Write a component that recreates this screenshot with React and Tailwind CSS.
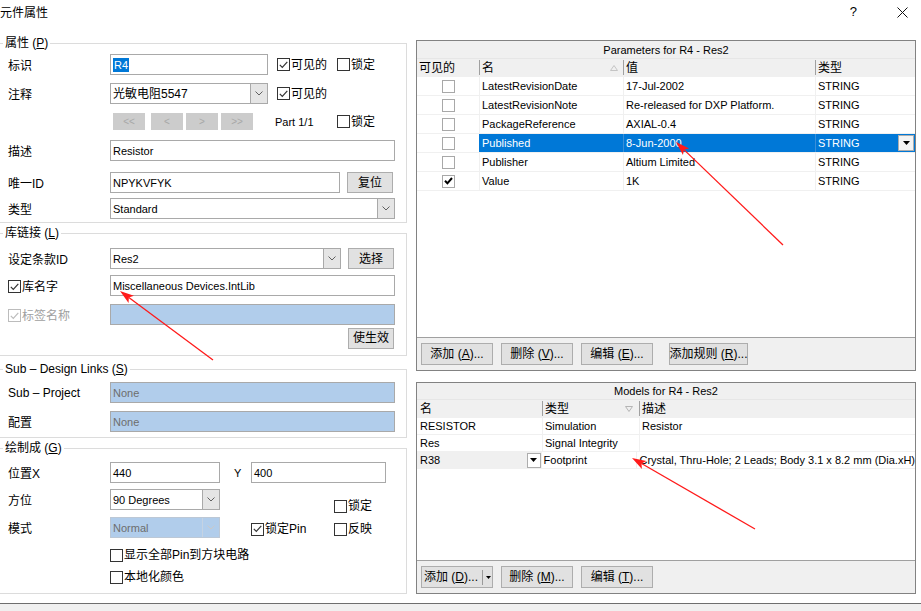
import React from "react";

const F = "font-['Liberation_Sans','Noto_Sans_CJK_SC',sans-serif]";

const Chevron = ({ color = "#606060" }) => (
  <svg width="8" height="5" viewBox="0 0 8 5">
    <path d="M0.5 0.5 L4 4 L7.5 0.5" fill="none" stroke={color} strokeWidth="1" />
  </svg>
);

const DownTri = () => (
  <svg width="7" height="4" viewBox="0 0 7 4">
    <polygon points="0,0 7,0 3.5,4" fill="#000" />
  </svg>
);

const Box = ({ checked, disabled }) => (
  <span
    className={`inline-flex w-[13px] h-[13px] shrink-0 items-center justify-center border bg-white ${
      disabled ? "border-[#bcbcbc]" : "border-[#333333]"
    }`}
  >
    {checked && (
      <svg width="9" height="8" viewBox="0 0 9 8">
        <path
          d="M0.8 3.8 L3.3 6.4 L8.3 0.9"
          fill="none"
          stroke={disabled ? "#bcbcbc" : "#333333"}
          strokeWidth="1.2"
        />
      </svg>
    )}
  </span>
);

const CheckLabel = ({ checked, disabled, children, className = "" }) => (
  <div className={`flex items-center gap-[1px] h-[14px] whitespace-nowrap ${disabled ? "text-[#a0a0a0]" : ""} ${className}`}>
    <Box checked={checked} disabled={disabled} />
    <span className="leading-[14px]">{children}</span>
  </div>
);

const Field = ({ className = "", blue, children }) => (
  <div
    className={`h-[21px] flex items-center pl-[2px] border border-[#a9a9a9] text-[11px] whitespace-nowrap overflow-hidden ${
      blue ? "bg-[#b1cdeb] text-[#6d6d6d]" : "bg-white"
    } ${className}`}
  >
    {children}
  </div>
);

const Combo = ({ className = "", disabled, children }) => (
  <div
    className={`h-[21px] flex border ${
      disabled ? "border-[#bcc8d6] bg-[#b1cdeb] text-[#6d6d6d]" : "border-[#a9a9a9] bg-white"
    } ${className}`}
  >
    <div className="flex-1 flex items-center pl-[2px] text-[11px] overflow-hidden whitespace-nowrap">{children}</div>
    <div
      className={`w-[17px] flex items-center justify-center border-l ${
        disabled ? "border-[#c5d3e3] bg-[#b1cdeb]" : "border-[#a9a9a9] bg-[#e5e5e5]"
      }`}
    >
      <Chevron color={disabled ? "#c9c9c9" : "#606060"} />
    </div>
  </div>
);

const Btn = ({ className = "", children }) => (
  <div className={`h-[21px] flex items-center justify-center bg-[#e1e1e1] border border-[#adadad] whitespace-nowrap ${className}`}>
    {children}
  </div>
);

const NavBtn = ({ children, className = "" }) => (
  <div className={`w-[32px] h-[17px] flex items-center justify-center bg-[#cccccc] text-[#a8a8a8] text-[10px] ${className}`}>
    {children}
  </div>
);

const Label = ({ children, className = "" }) => (
  <span className={`w-[102px] shrink-0 pt-[3px] leading-[14px] whitespace-nowrap ${className}`}>{children}</span>
);

const Group = ({ title, h, className = "", children, pt }) => (
  <fieldset className={`w-[407px] min-w-0 border border-l-0 border-[#dcdcdc] ${h} ${className}`}>
    <legend className="ml-[3px] px-[2px] leading-[16px] text-[12px]">{title}</legend>
    <div className={`flex flex-col pl-[8px] pr-[11px] ${pt}`}>{children}</div>
  </fieldset>
);

function Arrow({ x1, y1, x2, y2 }) {
  const dx = x2 - x1;
  const dy = y2 - y1;
  const L = Math.hypot(dx, dy);
  const ux = dx / L;
  const uy = dy / L;
  const len = 14;
  const w = 4.5;
  const bx = x2 - ux * len;
  const by = y2 - uy * len;
  const nx = x2 - ux * (len - 3);
  const ny = y2 - uy * (len - 3);
  const pts = `${x2},${y2} ${bx - uy * w},${by + ux * w} ${nx},${ny} ${bx + uy * w},${by - ux * w}`;
  return (
    <g>
      <line x1={x1} y1={y1} x2={nx} y2={ny} stroke="#ff1a1a" strokeWidth="1.3" />
      <polygon points={pts} fill="#ff1a1a" />
    </g>
  );
}

const params = [
  { v: false, n: "LatestRevisionDate", val: "17-Jul-2002", t: "STRING" },
  { v: false, n: "LatestRevisionNote", val: "Re-released for DXP Platform.", t: "STRING" },
  { v: false, n: "PackageReference", val: "AXIAL-0.4", t: "STRING" },
  { v: false, n: "Published", val: "8-Jun-2000", t: "STRING", sel: true },
  { v: false, n: "Publisher", val: "Altium Limited", t: "STRING" },
  { v: true, n: "Value", val: "1K", t: "STRING" },
];

const GridBox = ({ checked }) => (
  <span className="inline-flex w-[13px] h-[13px] items-center justify-center border border-[#a8a8a8] bg-white">
    {checked && (
      <svg width="9" height="8" viewBox="0 0 9 8">
        <path d="M1 3.8 L3.4 6.3 L8 1" fill="none" stroke="#000" strokeWidth="2" />
      </svg>
    )}
  </span>
);

const SortUp = () => (
  <svg width="8" height="6" viewBox="0 0 8 6">
    <polygon points="4,0.5 7.5,5.5 0.5,5.5" fill="none" stroke="#c4c4c4" strokeWidth="1" />
  </svg>
);
const SortDown = () => (
  <svg width="8" height="6" viewBox="0 0 8 6">
    <polygon points="0.5,0.5 7.5,0.5 4,5.5" fill="none" stroke="#b4b4b4" strokeWidth="1" />
  </svg>
);

const Acc = ({ pre, k, post }) => (
  <span className="whitespace-nowrap">
    {pre}(<u>{k}</u>){post}
  </span>
);

function ParamsPanel() {
  return (
    <div className="h-[331px] flex flex-col border border-[#828282] bg-white">
      <div className="h-[18px] shrink-0 flex items-center justify-center bg-[#f0f0f0] border-b border-[#e6e6e6] text-[11px]">
        Parameters for R4 - Res2
      </div>
      <div className="h-[18px] shrink-0 flex bg-[#f0f0f0] border-b border-[#f0f0f0]">
        <div className="w-[62px] flex items-center pl-[2px]">可见的</div>
        <div className="w-[144px] flex items-center justify-between pl-[2px] pr-[5px] border-l border-[#a0a0a0] my-[1px]">
          <span>名</span>
          <SortUp />
        </div>
        <div className="w-[192px] flex items-center pl-[2px] border-l border-[#a0a0a0] my-[1px]">值</div>
        <div className="flex-1 flex items-center pl-[2px] border-l border-[#a0a0a0] my-[1px]">类型</div>
      </div>
      <div className="flex-1 flex flex-col text-[11px]">
        {params.map((p) => (
          <div key={p.n} className="h-[19px] flex border-b border-[#f0f0f0]">
            <div className="w-[62px] flex items-center justify-center">
              <GridBox checked={p.v} />
            </div>
            <div
              className={`w-[144px] flex items-center pl-[2px] border-l ${
                p.sel ? "bg-[#0078d7] text-white border-[#0078d7]" : "border-[#f0f0f0]"
              }`}
            >
              {p.n}
            </div>
            <div
              className={`w-[192px] flex items-center pl-[2px] border-l ${
                p.sel ? "bg-[#0078d7] text-white border-[#3a8fd8]" : "border-[#f0f0f0]"
              }`}
            >
              {p.val}
            </div>
            <div
              className={`flex-1 flex items-center pl-[2px] border-l ${
                p.sel ? "bg-[#0078d7] text-white border-[#3a8fd8]" : "border-[#f0f0f0]"
              }`}
            >
              <span className="flex-1">{p.t}</span>
              {p.sel && (
                <span className="w-[16px] h-[16px] mr-[1px] flex items-center justify-center bg-[#f4f4f4] border border-[#adadad]">
                  <DownTri />
                </span>
              )}
            </div>
          </div>
        ))}
      </div>
      <div className="h-[33px] shrink-0 flex items-start pt-[5px] pl-[4px] bg-[#f0f0f0] border-t border-[#a0a0a0]">
        <Btn className="w-[72px] h-[22px]">
          <Acc pre="添加 " k="A" post="..." />
        </Btn>
        <Btn className="w-[72px] h-[22px] ml-[8px]">
          <Acc pre="删除 " k="V" post="..." />
        </Btn>
        <Btn className="w-[72px] h-[22px] ml-[8px]">
          <Acc pre="编辑 " k="E" post="..." />
        </Btn>
        <Btn className="w-[79px] h-[22px] ml-[16px] border-[#8c8c8c]">
          <Acc pre="添加规则 " k="R" post="..." />
        </Btn>
      </div>
    </div>
  );
}

const models = [
  { n: "RESISTOR", t: "Simulation", d: "Resistor" },
  { n: "Res", t: "Signal Integrity", d: "" },
  { n: "R38", t: "Footprint", d: "Crystal, Thru-Hole; 2 Leads; Body 3.1 x 8.2 mm (Dia.xH)", drop: true },
];

function ModelsPanel() {
  return (
    <div className="mt-[11px] h-[212px] flex flex-col border border-[#828282] bg-white">
      <div className="h-[17px] shrink-0 flex items-center justify-center bg-[#f0f0f0] border-b border-[#e6e6e6] text-[11px]">
        Models for R4 - Res2
      </div>
      <div className="h-[18px] shrink-0 flex bg-[#f0f0f0] border-b border-[#f0f0f0]">
        <div className="w-[125px] flex items-center pl-[3px]">名</div>
        <div className="w-[97px] flex items-center justify-between pl-[2px] pr-[6px] border-l border-[#a0a0a0] my-[1px]">
          <span>类型</span>
          <SortDown />
        </div>
        <div className="flex-1 flex items-center pl-[2px] border-l border-[#a0a0a0] my-[1px]">描述</div>
      </div>
      <div className="flex-1 flex flex-col text-[11px]">
        {models.map((m) => (
          <div key={m.n} className="h-[17px] flex border-b border-[#f0f0f0]">
            <div className={`w-[125px] flex items-center pl-[3px] ${m.drop ? "bg-[#f0f0f0]" : ""}`}>
              <span className="flex-1">{m.n}</span>
              {m.drop && (
                <span className="w-[14px] h-[15px] flex items-center justify-center bg-white border border-[#adadad]">
                  <DownTri />
                </span>
              )}
            </div>
            <div className="w-[97px] flex items-center pl-[2px] border-l border-[#f0f0f0] whitespace-nowrap">{m.t}</div>
            <div className="flex-1 flex items-center pl-[2px] border-l border-[#f0f0f0] whitespace-nowrap">{m.d}</div>
          </div>
        ))}
      </div>
      <div className="h-[33px] shrink-0 flex items-start pt-[5px] pl-[4px] bg-[#f0f0f0] border-t border-[#a0a0a0]">
        <Btn className="w-[72px] h-[22px] justify-start pl-[2px]">
          <Acc pre="添加 " k="D" post="..." />
          <span className="ml-[4px] w-px h-[15px] bg-[#9a9a9a]" />
          <span className="ml-[3px] flex items-center">
            <svg width="5" height="3" viewBox="0 0 5 3">
              <polygon points="0,0 5,0 2.5,3" fill="#000" />
            </svg>
          </span>
        </Btn>
        <Btn className="w-[72px] h-[22px] ml-[8px]">
          <Acc pre="删除 " k="M" post="..." />
        </Btn>
        <Btn className="w-[72px] h-[22px] ml-[8px]">
          <Acc pre="编辑 " k="T" post="..." />
        </Btn>
      </div>
    </div>
  );
}

export default function App() {
  return (
    <div className={`relative w-[921px] h-[611px] overflow-hidden bg-white text-black text-[12px] leading-[14px] ${F}`}>
      {/* title bar */}
      <div className="h-[35px] flex items-start pt-[6px]">
        <span className="leading-[14px]">元件属性</span>
        <span className="ml-auto text-[13px] leading-[14px] -mt-[1px]">?</span>
        <span className="ml-[40px] mr-[13px] mt-[1px]">
          <svg width="11" height="11" viewBox="0 0 11 11">
            <path d="M0.5 0.5 L10.5 10.5 M10.5 0.5 L0.5 10.5" stroke="#111" strokeWidth="1" />
          </svg>
        </span>
      </div>

      <div className="flex h-[559px]">
        {/* left column */}
        <div className="w-[407px] flex flex-col">
          <Group title={<Acc pre="属性 " k="P" />} h="h-[188px]" pt="pt-[3px]">
            <div className="flex items-center h-[21px]">
              <Label>标识</Label>
              <Field className="w-[158px]">
                <span className="bg-[#0078d7] text-white px-[1px] leading-[14px]">R4</span>
              </Field>
              <CheckLabel checked className="ml-[9px] w-[60px]">可见的</CheckLabel>
              <CheckLabel>锁定</CheckLabel>
            </div>
            <div className="flex items-center h-[21px] mt-[8px]">
              <Label>注释</Label>
              <Combo className="w-[158px]">
                <span className="text-[12px]">光敏电阻5547</span>
              </Combo>
              <CheckLabel checked className="ml-[9px]">可见的</CheckLabel>
            </div>
            <div className="flex items-center h-[17px] mt-[9px]">
              <span className="w-[105px] shrink-0" />
              <NavBtn>&lt;&lt;</NavBtn>
              <NavBtn className="ml-[6px]">&lt;</NavBtn>
              <NavBtn className="ml-[3px]">&gt;</NavBtn>
              <NavBtn className="ml-[3px]">&gt;&gt;</NavBtn>
              <span className="ml-[22px] w-[62px] text-[11px]">Part 1/1</span>
              <CheckLabel>锁定</CheckLabel>
            </div>
            <div className="flex items-center h-[21px] mt-[10px]">
              <Label>描述</Label>
              <Field className="flex-1">Resistor</Field>
            </div>
            <div className="flex items-center h-[21px] mt-[11px]">
              <Label>唯一ID</Label>
              <Field className="w-[230px]">NPYKVFYK</Field>
              <Btn className="w-[46px] ml-[7px]">复位</Btn>
            </div>
            <div className="flex items-center h-[21px] mt-[5px]">
              <Label>类型</Label>
              <Combo className="flex-1">Standard</Combo>
            </div>
          </Group>

          <Group title={<Acc pre="库链接 " k="L" />} h="h-[131px]" className="mt-[2px]" pt="pt-[7px]">
            <div className="flex items-center h-[21px]">
              <Label>设定条款ID</Label>
              <Combo className="w-[231px]">Res2</Combo>
              <Btn className="w-[46px] ml-[7px]">选择</Btn>
            </div>
            <div className="flex items-center h-[21px] mt-[6px]">
              <div className="w-[102px] shrink-0 pt-[2px]">
                <CheckLabel checked>库名字</CheckLabel>
              </div>
              <Field className="flex-1">Miscellaneous Devices.IntLib</Field>
            </div>
            <div className="flex items-center h-[21px] mt-[8px]">
              <div className="w-[102px] shrink-0 pt-[2px]">
                <CheckLabel checked disabled>标签名称</CheckLabel>
              </div>
              <Field className="flex-1" blue />
            </div>
            <div className="flex items-center justify-end h-[20px] mt-[3px]">
              <Btn className="w-[46px] h-[20px] mr-[1px]">使生效</Btn>
            </div>
          </Group>

          <Group title={<Acc pre="Sub – Design Links " k="S" />} h="h-[77px]" className="mt-[5px]" pt="pt-[5px]">
            <div className="flex items-center h-[21px]">
              <span className="w-[102px] shrink-0 leading-[14px]">Sub – Project</span>
              <Field className="flex-1" blue>None</Field>
            </div>
            <div className="flex items-center h-[21px] mt-[8px]">
              <Label>配置</Label>
              <Field className="flex-1" blue>None</Field>
            </div>
          </Group>

          <Group title={<Acc pre="绘制成 " k="G" />} h="h-[154px]" className="mt-[2px]" pt="pt-[6px]">
            <div className="flex items-center h-[21px]">
              <Label>位置X</Label>
              <Field className="w-[110px]">440</Field>
              <span className="ml-[14px] w-[17px] text-[11px]">Y</span>
              <Field className="w-[135px]">400</Field>
            </div>
            <div className="flex mt-[6px]">
              <div className="w-[212px] flex flex-col">
                <div className="flex items-center h-[21px]">
                  <Label>方位</Label>
                  <Combo className="w-[110px]">90 Degrees</Combo>
                </div>
                <div className="flex items-center h-[21px] mt-[7px]">
                  <Label>模式</Label>
                  <Combo className="w-[110px]" disabled>
                    Normal
                  </Combo>
                </div>
              </div>
              <div className="w-[114px] pl-[31px] pt-[33px]">
                <CheckLabel checked>锁定Pin</CheckLabel>
              </div>
              <div className="flex flex-col pt-[10px]">
                <CheckLabel>锁定</CheckLabel>
                <CheckLabel className="mt-[9px]">反映</CheckLabel>
              </div>
            </div>
            <div className="pl-[102px] mt-[10px]">
              <CheckLabel>显示全部Pin到方块电路</CheckLabel>
            </div>
            <div className="pl-[102px] mt-[8px]">
              <CheckLabel>本地化颜色</CheckLabel>
            </div>
          </Group>
        </div>

        {/* right column */}
        <div className="ml-[9px] w-[500px] flex flex-col pt-[5px]">
          <ParamsPanel />
          <ModelsPanel />
        </div>
      </div>

      <div className="h-[9px]" />
      <div className="h-px bg-[#6e6e6e]" />
      <div className="h-[7px] bg-[#f0f0f0]" />

      <svg className="absolute left-0 top-0 pointer-events-none" width="921" height="611" viewBox="0 0 921 611">
        <Arrow x1={213} y1={360} x2={120} y2={291} />
        <Arrow x1={783} y1={245} x2={676} y2={142} />
        <Arrow x1={755} y1={529} x2={632} y2={458} />
      </svg>
    </div>
  );
}
